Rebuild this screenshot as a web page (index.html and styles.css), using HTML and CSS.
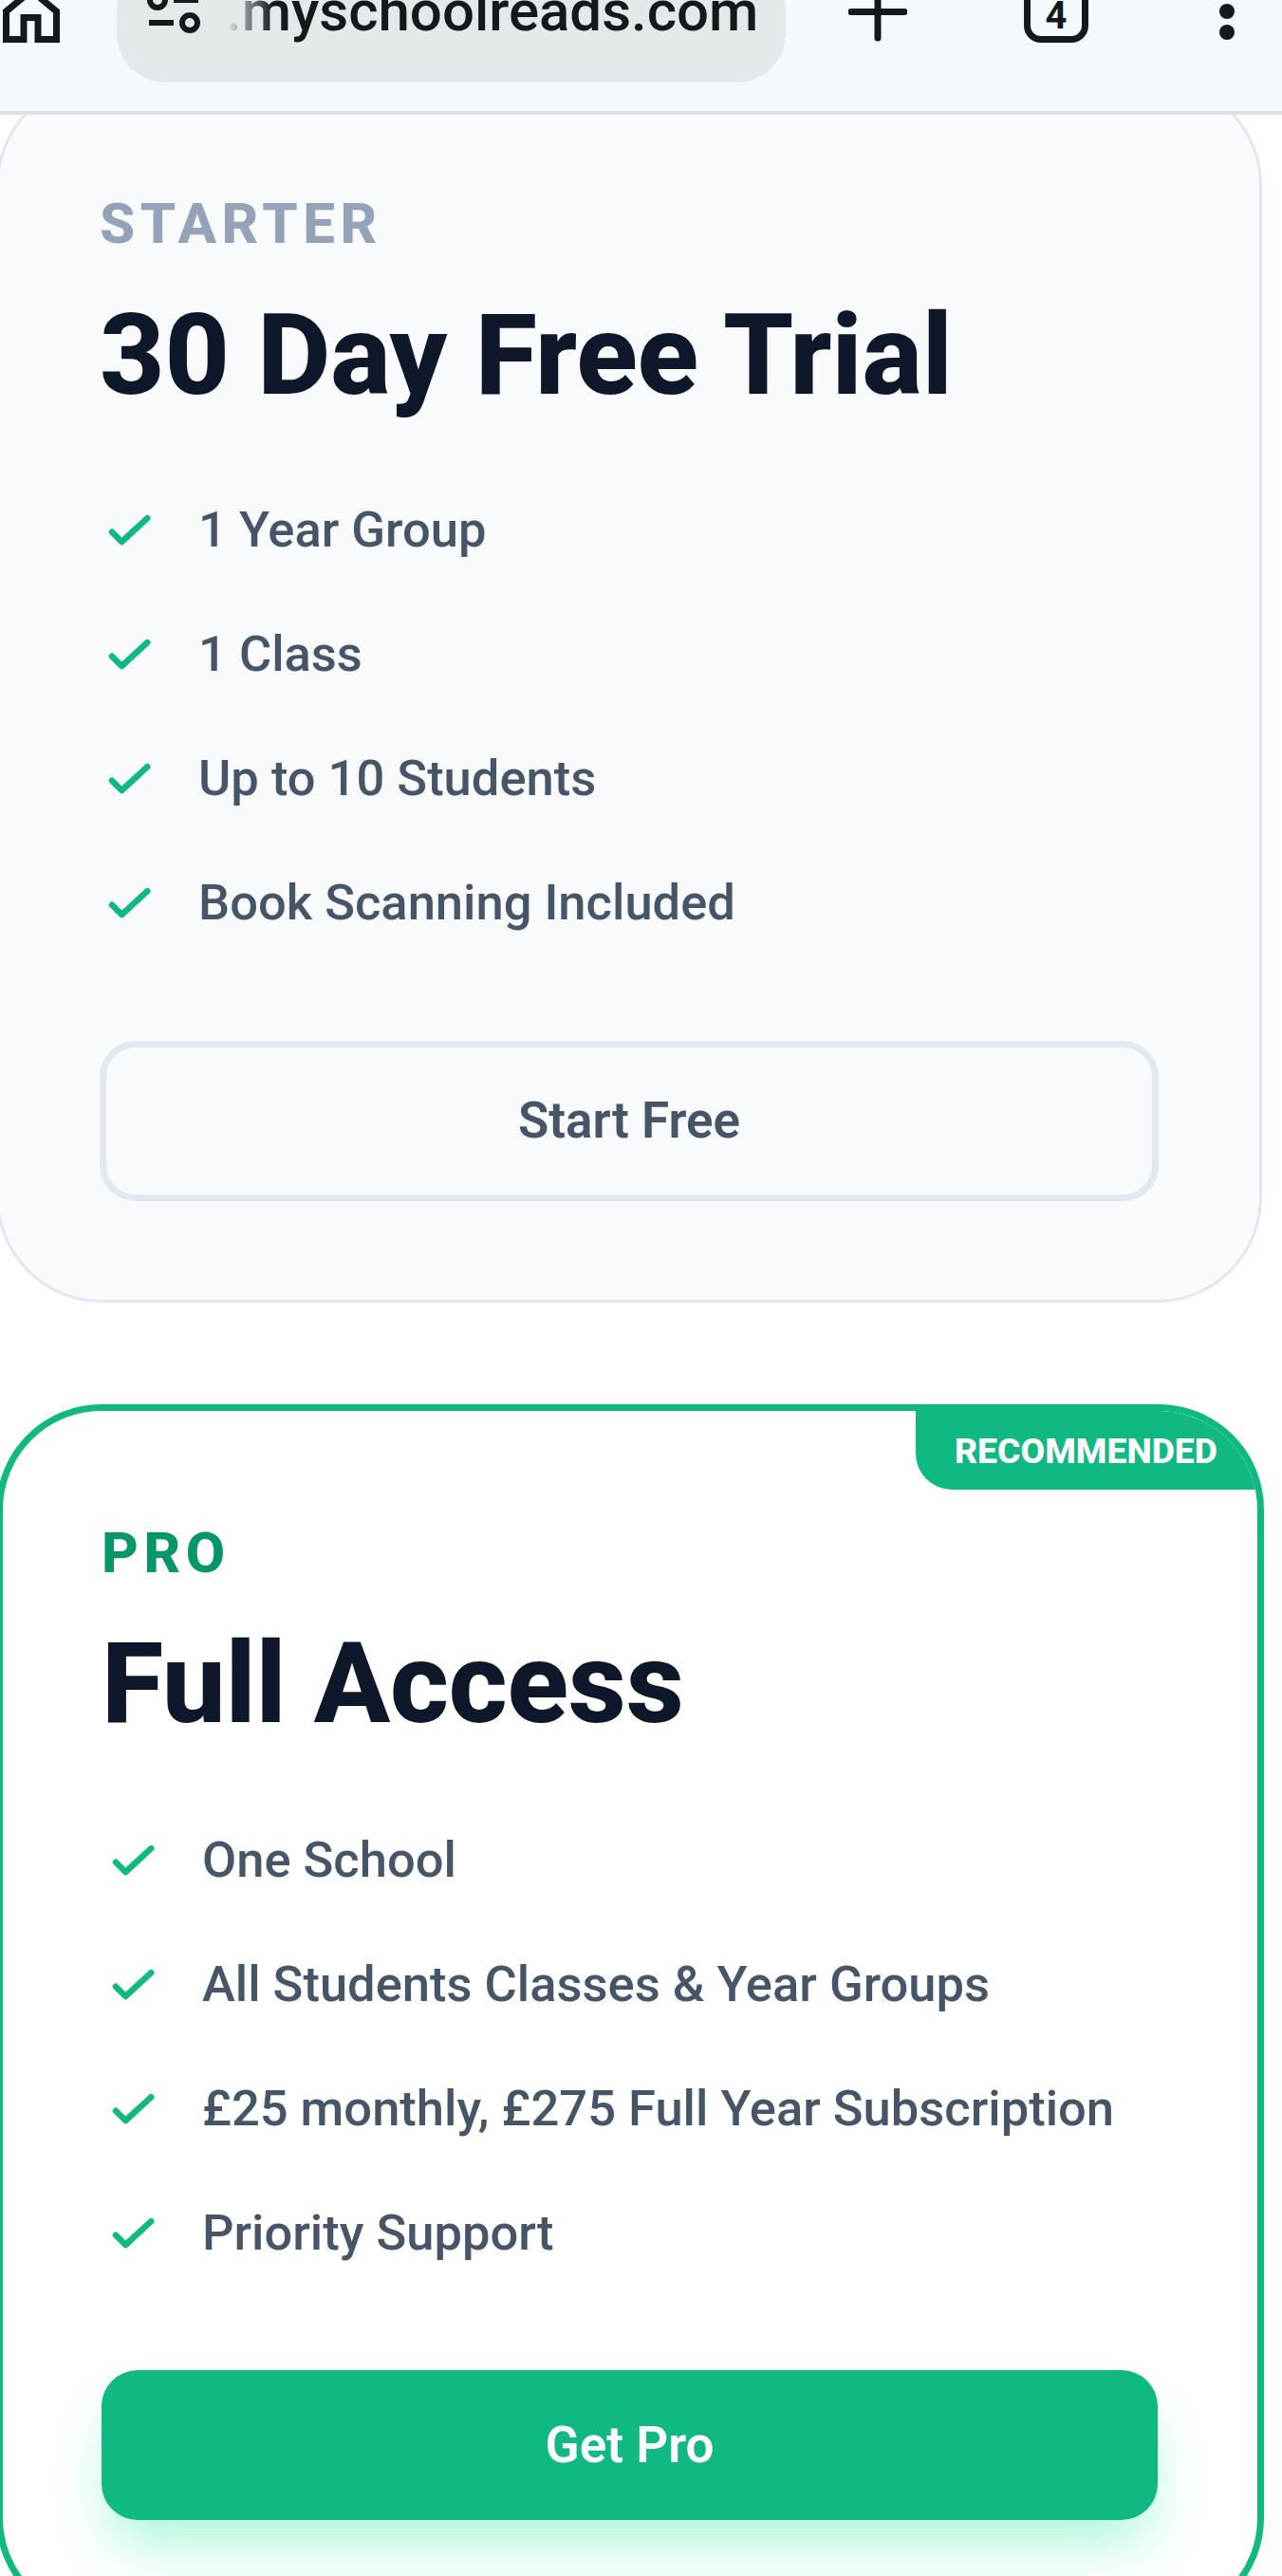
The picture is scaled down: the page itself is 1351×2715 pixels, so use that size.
FILE: index.html
```html
<!DOCTYPE html>
<html lang="en">
<head>
    <meta charset="UTF-8">
    <meta name="viewport" content="width=device-width, initial-scale=1.0">
    <title>Pricing</title>
    <link rel="stylesheet" href="styles.css">
</head>
<body>
    <header class="browser-bar">
        <svg class="home-icon" width="66" height="50" viewBox="0 0 66 50">
            <path d="M6.500 41.500 V12 L33 -10 L59.500 12 V41.500 H40 V18.500 H25 V41.500 Z" fill="none" stroke="#14191d" stroke-width="7"/>
        </svg>
        <div class="address-pill">
            <svg class="tune-icon" width="56" height="36" viewBox="0 0 56 36">
                <circle cx="11" cy="0" r="8" fill="none" stroke="#14191d" stroke-width="6"/>
                <path d="M28 0 H54" stroke="#14191d" stroke-width="6"/>
                <circle cx="45" cy="24" r="8" fill="none" stroke="#14191d" stroke-width="6"/>
                <path d="M2 24 H28" stroke="#14191d" stroke-width="6"/>
            </svg>
            <span class="address-text">.myschoolreads.com</span>
        </div>
        <svg class="plus-icon" width="62" height="46" viewBox="0 0 62 46">
            <path d="M3 12.500 H59 M31 -10 V40" fill="none" stroke="#14191d" stroke-width="7" stroke-linecap="round"/>
        </svg>
        <div class="tab-count">4</div>
        <svg class="menu-icon" width="20" height="46" viewBox="0 0 20 46">
            <circle cx="10" cy="12" r="8" fill="#14191d"/>
            <circle cx="10" cy="34" r="8" fill="#14191d"/>
        </svg>
    </header>

    <main class="plans">
        <section class="plan-card plan-starter">
            <div class="plan-label">STARTER</div>
            <h2 class="plan-title">30 Day Free Trial</h2>
            <ul class="feature-list">
                <li><svg class="check" viewBox="0 0 48 38"><path d="M4 21.700 L14.300 32 L41.300 7.200"/></svg>1 Year Group</li>
                <li><svg class="check" viewBox="0 0 48 38"><path d="M4 21.700 L14.300 32 L41.300 7.200"/></svg>1 Class</li>
                <li><svg class="check" viewBox="0 0 48 38"><path d="M4 21.700 L14.300 32 L41.300 7.200"/></svg>Up to 10 Students</li>
                <li><svg class="check" viewBox="0 0 48 38"><path d="M4 21.700 L14.300 32 L41.300 7.200"/></svg>Book Scanning Included</li>
            </ul>
            <a class="plan-btn" href="#">Start Free</a>
        </section>

        <section class="plan-card plan-pro">
            <div class="plan-badge">RECOMMENDED</div>
            <div class="plan-label">PRO</div>
            <h2 class="plan-title">Full Access</h2>
            <ul class="feature-list">
                <li><svg class="check" viewBox="0 0 48 38"><path d="M4 21.700 L14.300 32 L41.300 7.200"/></svg>One School</li>
                <li><svg class="check" viewBox="0 0 48 38"><path d="M4 21.700 L14.300 32 L41.300 7.200"/></svg>All Students Classes &amp; Year Groups</li>
                <li><svg class="check" viewBox="0 0 48 38"><path d="M4 21.700 L14.300 32 L41.300 7.200"/></svg>£25 monthly, £275 Full Year Subscription</li>
                <li><svg class="check" viewBox="0 0 48 38"><path d="M4 21.700 L14.300 32 L41.300 7.200"/></svg>Priority Support</li>
            </ul>
            <a class="plan-btn" href="#">Get Pro</a>
        </section>
    </main>
</body>
</html>
```

FILE: styles.css
```css
* {
    margin: 0;
    padding: 0;
    box-sizing: border-box;
}

html, body {
    height: 2715px;
    overflow: hidden;
}

body {
    font-family: 'Roboto', 'Liberation Sans', sans-serif;
    background-color: #fff;
}

.browser-bar {
    position: relative;
    z-index: 2;
    display: flex;
    align-items: flex-start;
    height: 121px;
    margin-bottom: -37px;
    background-color: #f4f9fd;
    border-bottom: 4px solid #dde1e4;
    overflow: hidden;
}

.home-icon {
    flex: none;
}

.address-pill {
    flex: none;
    display: flex;
    align-items: flex-start;
    width: 705px;
    height: 127px;
    margin-top: -40px;
    margin-left: 57px;
    padding-left: 32px;
    background-color: #e3e8eb;
    border-radius: 52px;
    overflow: hidden;
}

.tune-icon {
    flex: none;
    margin-top: 40px;
}

.address-text {
    margin-left: 27px;
    margin-top: 7px;
    font-size: 60px;
    font-weight: 500;
    line-height: 90px;
    white-space: nowrap;
    color: #14191d;
    -webkit-mask-image: linear-gradient(90deg, transparent 0, #000 50px);
    mask-image: linear-gradient(90deg, transparent 0, #000 50px);
}

.plus-icon {
    flex: none;
    margin-left: 66px;
}

.tab-count {
    flex: none;
    width: 68px;
    height: 67px;
    margin-top: -22px;
    margin-left: 123px;
    padding-top: 12px;
    border: 7px solid #14191d;
    border-radius: 18px;
    font-size: 40px;
    font-weight: 700;
    line-height: 40px;
    text-align: center;
    color: #14191d;
}

.menu-icon {
    flex: none;
    margin-left: 136px;
}

.plans {
    width: 1336px;
    margin-left: -4px;
}

.plan-card {
    position: relative;
    padding: 104px 106px;
    background-color: #f8fafc;
    border: 3px solid #e2e8f0;
    border-radius: 111px;
    overflow: hidden;
}

.plan-starter {
    margin-right: 2px;
}

.plan-label {
    font-size: 60px;
    font-weight: 800;
    line-height: 90px;
    letter-spacing: 5.500px;
    color: #94a3b8;
}

.plan-title {
    margin-top: 23px;
    font-size: 119px;
    font-weight: 800;
    line-height: 1.2;
    letter-spacing: -0.200px;
    color: #0f172a;
}

.feature-list {
    margin-top: 46px;
    list-style: none;
}

.feature-list li {
    display: flex;
    align-items: center;
    height: 131px;
    font-size: 52.500px;
    font-weight: 500;
    color: #475569;
}

.check {
    flex: none;
    width: 48px;
    height: 38px;
    margin-left: 9px;
    margin-right: 47px;
    fill: none;
    stroke: #10b981;
    stroke-width: 6.500;
    stroke-linecap: round;
    stroke-linejoin: round;
}

.plan-btn {
    display: flex;
    align-items: center;
    justify-content: center;
    height: 169px;
    margin-top: 80px;
    background-color: transparent;
    border: 7px solid #e2e8f0;
    border-radius: 38px;
    font-size: 53px;
    font-weight: 600;
    color: #475569;
    text-decoration: none;
}

.plan-pro {
    margin-top: 107px;
    padding: 105px 105px 102px 104px;
    background-color: #fff;
    border: 7px solid #10b981;
    box-shadow: 0 35px 52px -10px rgba(0, 0, 0, 0.04);
}

.plan-pro .plan-label {
    color: #059669;
}

.plan-pro .plan-title {
    margin-top: 22px;
}

.plan-pro .feature-list {
    margin-top: 48px;
}

.plan-pro .check {
    margin-left: 11px;
    margin-right: 47px;
}

.plan-pro .plan-btn {
    height: 158px;
    margin-top: 79px;
    background-color: #10b981;
    border: none;
    color: #fff;
    box-shadow: 0 35px 60px -10px rgba(52, 235, 160, 0.42);
}

.plan-badge {
    position: absolute;
    top: 0;
    right: 0;
    padding: 24px 42px 22px 41px;
    background-color: #10b981;
    border-bottom-left-radius: 38px;
    font-size: 37.300px;
    font-weight: 800;
    line-height: 37px;
    color: #fff;
}
```
